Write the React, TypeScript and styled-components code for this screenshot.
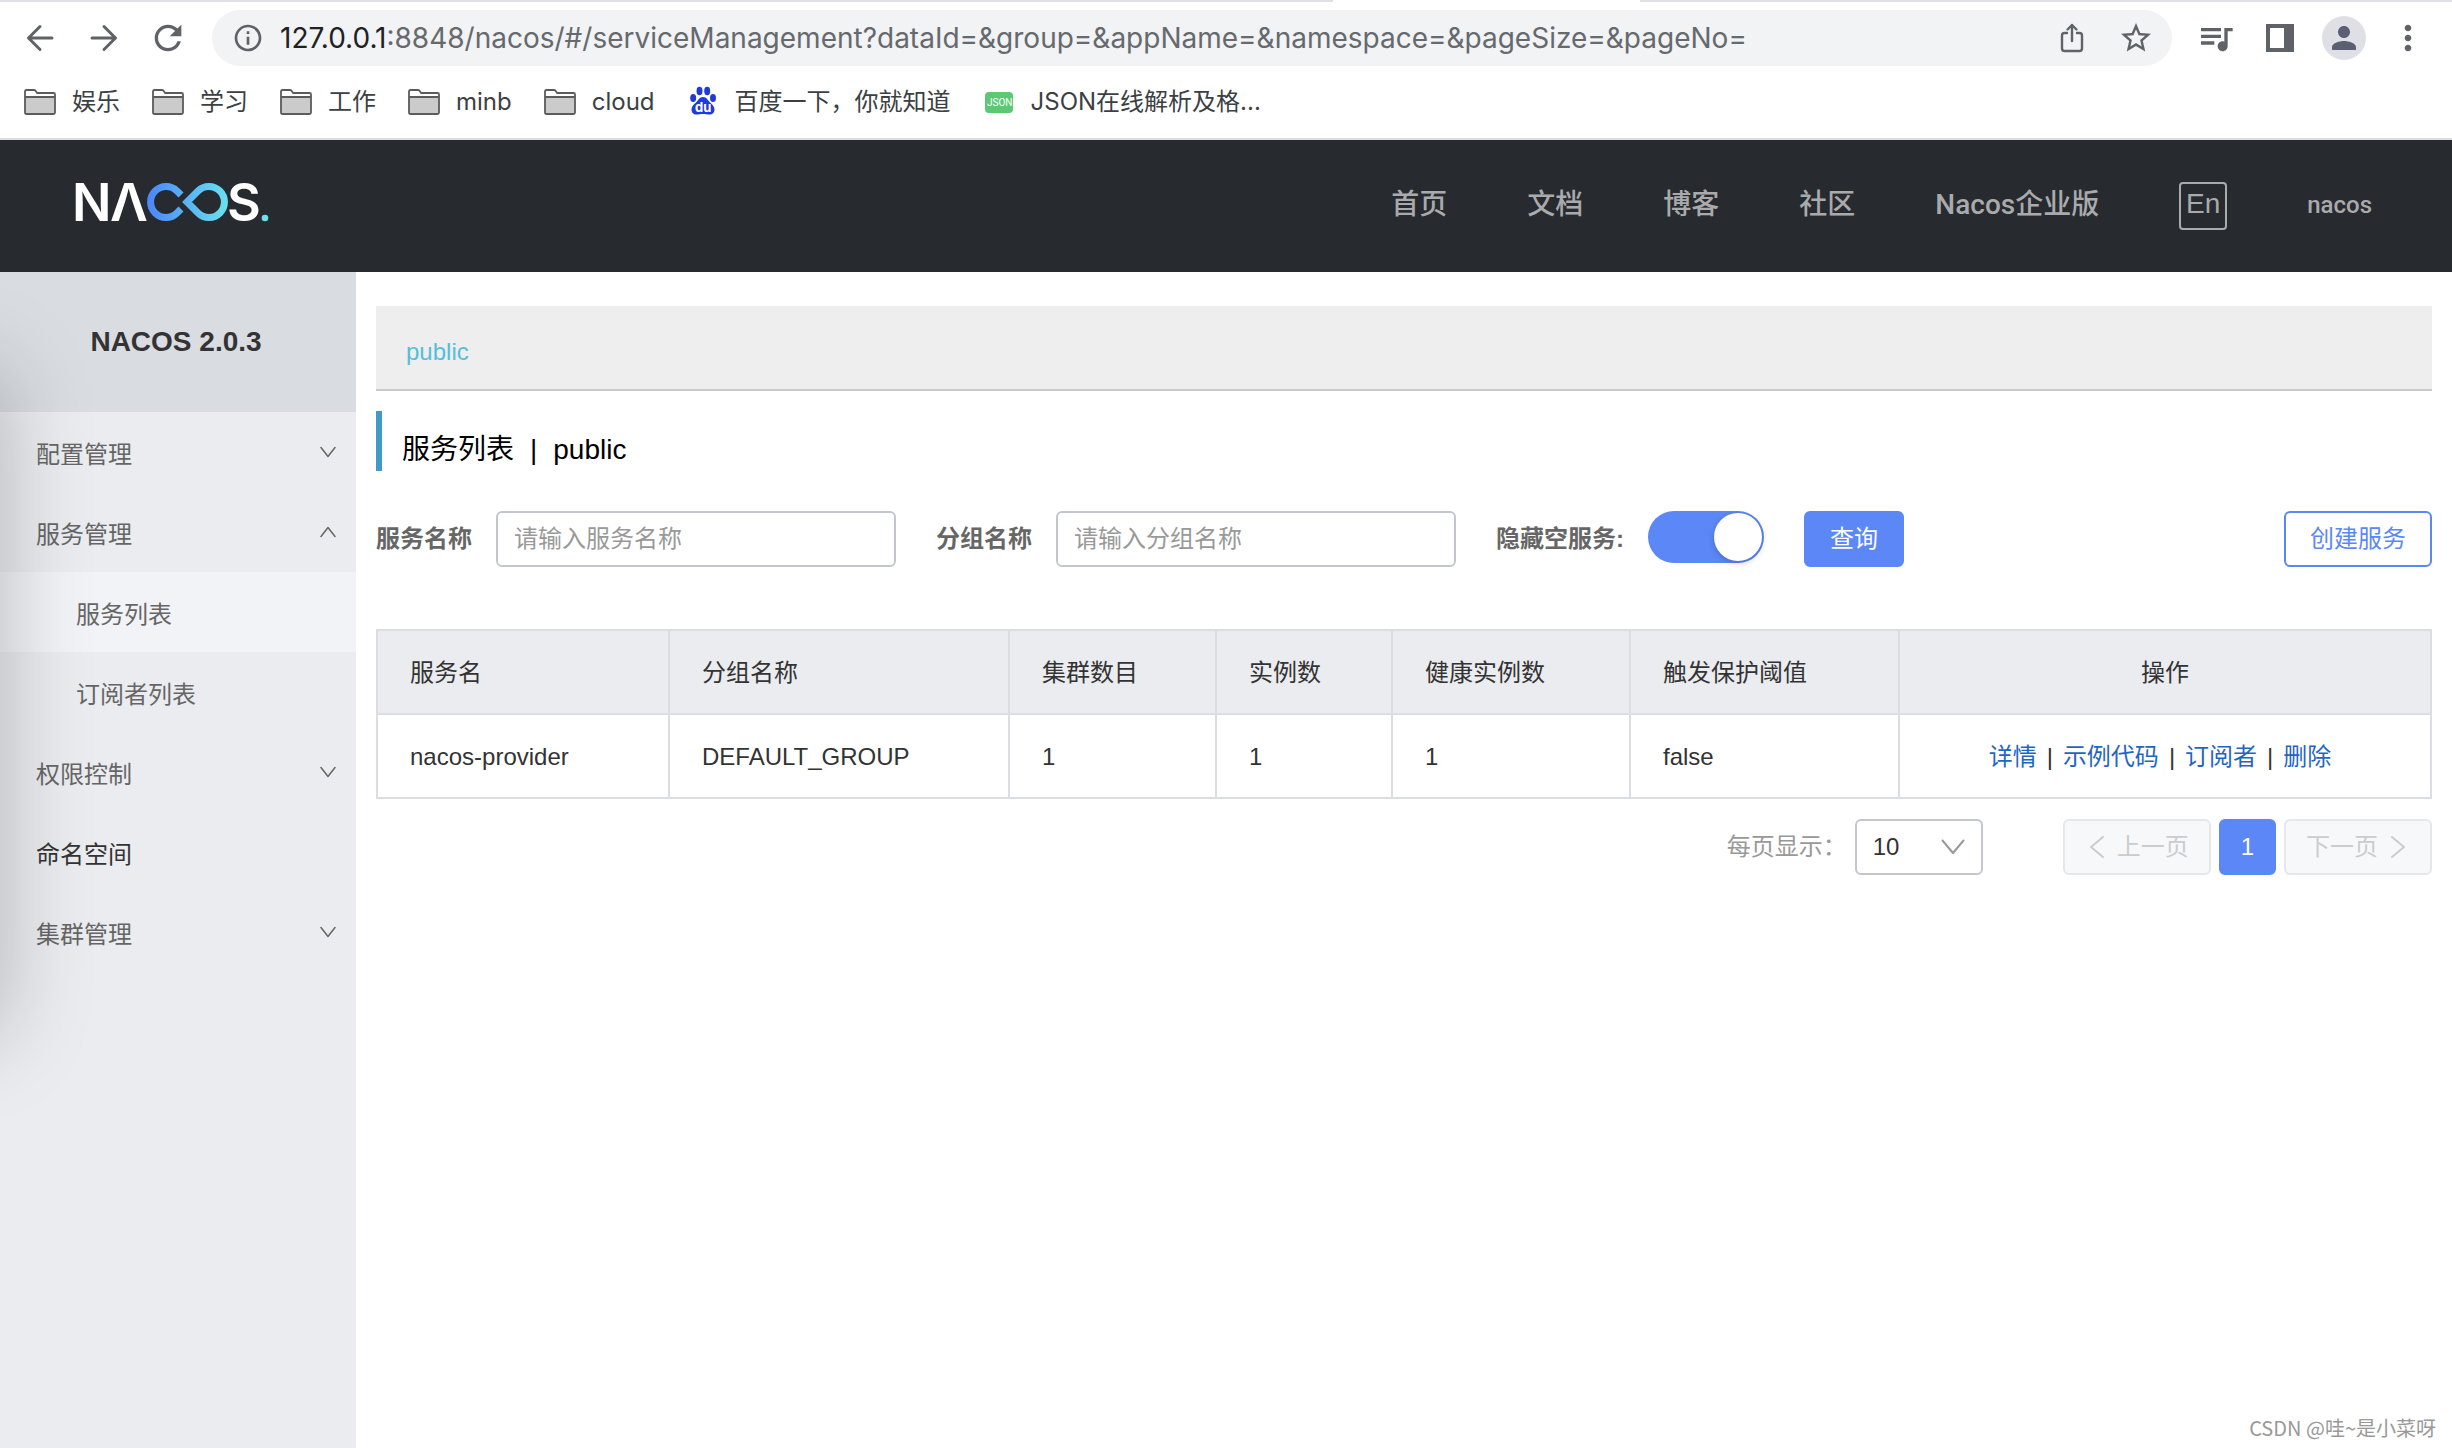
import React, { useState } from "react";
import styled, { createGlobalStyle, css } from "styled-components";
import {
  MdInfoOutline,
  MdMoreVert,
  MdPerson,
  MdQueueMusic,
  MdRefresh,
  MdStarBorder,
} from "react-icons/md";

const fonts = {
  page: '"Liberation Sans", "Noto Sans CJK SC", sans-serif',
  chrome: 'Inter, "Noto Sans CJK SC", sans-serif',
  nav: 'Roboto, "Noto Sans CJK SC", sans-serif',
};

const colors = {
  primary: "#5b87f7",
  border: "#c3c6cf",
  tableLine: "#dcdde2",
  side: "#ebecf0",
  icon: "#5f6368",
};

const GlobalStyle = createGlobalStyle`
  *, *::before, *::after { box-sizing: border-box; }
  body { margin: 0; background: #fff; font: 24px/36px ${fonts.page}; color: #333; }
  button, input, select { font: inherit; color: inherit; margin: 0; }
  button { cursor: pointer; }
  a { color: inherit; text-decoration: none; }
  svg { display: block; flex: none; }
`;

const Page = styled.div`
  position: relative;
  display: flex;
  flex-direction: column;
  min-height: 100vh;
`;

/* ---------- browser chrome ---------- */

const Chrome = styled.div`
  font-family: ${fonts.chrome};
  border-bottom: 2px solid #dadce0;
`;

const TabEdge = styled.div`
  display: flex;
  height: 2px;
  background: #fff;
`;

const TabEdgePart = styled.span<{ $grow: number; $shaded?: boolean }>`
  flex: ${(p) => p.$grow} 1 0;
  background: ${(p) => (p.$shaded ? "#e1e0e6" : "transparent")};
`;

const Toolbar = styled.div`
  display: flex;
  align-items: center;
  padding: 8px 12px 8px 8px;
`;

const ToolButton = styled.button`
  display: flex;
  align-items: center;
  justify-content: center;
  width: 64px;
  height: 56px;
  padding: 0;
  border: 0;
  background: none;
  color: ${colors.icon};
`;

const AddressBar = styled.div`
  flex: 1;
  display: flex;
  align-items: center;
  height: 56px;
  margin: 0 12px;
  padding: 0 4px 0 20px;
  border-radius: 28px;
  background: #f1f3f4;
  color: ${colors.icon};
`;

const Url = styled.span`
  flex: 1;
  margin-left: 16px;
  font-size: 28px;
  white-space: nowrap;
  color: #66696d;
`;

const Host = styled.span`
  color: #202124;
`;

const Avatar = styled.span`
  display: flex;
  align-items: center;
  justify-content: center;
  width: 44px;
  height: 44px;
  border-radius: 50%;
  background: #dfe0e5;
  color: #5a6072;
`;

const Bookmarks = styled.nav`
  display: flex;
  gap: 32px;
  padding: 10px 24px 18px;
  height: 64px;
`;

const Bookmark = styled.a`
  display: flex;
  align-items: center;
  gap: 16px;
  white-space: nowrap;
  color: #3c4043;
`;

const BaiduText = styled.text`
  font: bold 13px ${fonts.chrome};
  fill: #fff;
`;

const JsonText = styled.text`
  font: 10px Roboto, sans-serif;
  fill: #fff;
`;

/* ---------- console header ---------- */

const Header = styled.header`
  display: flex;
  align-items: center;
  justify-content: space-between;
  height: 132px;
  padding: 0 80px 0 76px;
  background: #272a2f;
`;

const LogoLink = styled.a`
  padding-bottom: 8px;
`;

const LogoText = styled.text`
  font: 600 52px Inter, sans-serif;
  fill: #fff;
`;

const TopNav = styled.nav`
  display: flex;
  align-items: center;
  gap: 80px;
  font: 500 28px/40px ${fonts.nav};
  color: #a9aaac;
  white-space: nowrap;

  a {
    padding-bottom: 2px;
  }
`;

const LanguageButton = styled.button`
  width: 48px;
  height: 48px;
  padding: 0 0 4px;
  border: 2px solid #a9aaac;
  border-radius: 4px;
  background: none;
  font-family: ${fonts.page};
`;

const UserLink = styled.a`
  font-size: 24px;
`;

/* ---------- sidebar ---------- */

const Body = styled.div`
  flex: 1;
  display: flex;
`;

const Sidebar = styled.aside`
  position: relative;
  overflow: hidden;
  flex: none;
  width: 356px;
  background: ${colors.side};

  &::after {
    content: "";
    position: absolute;
    top: 100px;
    left: -200px;
    width: 200px;
    height: 660px;
    box-shadow: 0 0 90px rgba(0, 0, 0, 0.25);
    pointer-events: none;
  }
`;

const Version = styled.h1`
  display: flex;
  align-items: center;
  justify-content: center;
  height: 140px;
  margin: 0;
  padding-right: 4px;
  background: #d9dce1;
  font-size: 28px;
  line-height: 40px;
`;

const menuRow = css`
  display: flex;
  align-items: center;
  justify-content: space-between;
  width: 100%;
  height: 80px;
  border: 0;
  text-align: left;

  svg {
    margin-bottom: 6px;
  }
`;

const MenuGroup = styled.button`
  ${menuRow}
  padding: 6px 20px 0 36px;
  background: none;
  color: #666;
`;

const MenuLink = styled.a<{ $nested?: boolean; $active?: boolean }>`
  ${menuRow}
  padding: 6px 20px 0 ${(p) => (p.$nested ? 76 : 36)}px;
  background: ${(p) => (p.$active ? "#f2f3f7" : "transparent")};
  color: ${(p) => (p.$nested ? "#666" : "#333")};
`;

/* ---------- content ---------- */

const Content = styled.main`
  flex: 1;
  min-width: 0;
  padding: 34px 20px;
`;

const NamespaceBar = styled.div`
  height: 85px;
  padding: 28px 30px 0;
  border-bottom: 2px solid #c9cacc;
  background: #eee;
  color: #56bedb;
`;

const Heading = styled.h2`
  height: 60px;
  margin: 20px 0 40px;
  padding: 19px 0 0 20px;
  border-left: 6px solid #4199c9;
  font-size: 28px;
  font-weight: 400;
  line-height: 40px;
  color: #000;
`;

const HeadingBar = styled.span`
  margin: 0 16px;
`;

const SearchForm = styled.form`
  display: flex;
  align-items: center;
  height: 56px;
  margin-bottom: 62px;
`;

const Field = styled.label`
  display: flex;
  align-items: center;
  gap: 24px;
  margin-right: 40px;
  font-weight: 700;
  color: #666;
  white-space: nowrap;
`;

const TextInput = styled.input`
  width: 400px;
  height: 56px;
  padding: 0 16px;
  border: 2px solid ${colors.border};
  border-radius: 6px;
  font-weight: 400;
  outline: none;

  &::placeholder {
    color: #999;
  }
`;

const Switch = styled.input`
  appearance: none;
  display: flex;
  width: 116px;
  height: 52px;
  margin-bottom: 4px;
  padding: 2px;
  border-radius: 26px;
  background: #c4c6cf;
  cursor: pointer;

  &::after {
    content: "";
    width: 48px;
    height: 48px;
    border-radius: 50%;
    background: #fff;
    box-shadow: 0 2px 6px rgba(0, 0, 0, 0.2);
  }

  &:checked {
    justify-content: flex-end;
    background: ${colors.primary};
  }
`;

const Button = styled.button<{ $kind: "primary" | "outline" | "plain" }>`
  display: flex;
  align-items: center;
  justify-content: center;
  gap: 12px;
  height: 56px;
  padding: 0 24px;
  border: 2px solid ${colors.primary};
  border-radius: 6px;
  background: ${(p) => (p.$kind === "primary" ? colors.primary : "#fff")};
  color: ${(p) => (p.$kind === "primary" ? "#fff" : colors.primary)};
  white-space: nowrap;

  &:disabled {
    border-color: #e6e7eb;
    background: #f7f8fa;
    color: #ccc;
    cursor: default;
  }
`;

const CreateButton = styled(Button)`
  margin-left: auto;
`;

const PageButton = styled(Button)`
  padding: 0 20px;
`;

const Table = styled.table`
  width: 100%;
  table-layout: fixed;
  border-collapse: separate;
  border-spacing: 0;
  border: solid ${colors.tableLine};
  border-width: 2px 0 0 2px;
`;

const cell = css<{ $center?: boolean }>`
  height: 84px;
  padding: 2px 32px 0;
  border: solid ${colors.tableLine};
  border-width: 0 2px 2px 0;
  font-weight: 400;
  text-align: ${(p) => (p.$center ? "center" : "left")};
`;

const HeadCell = styled.th<{ $center?: boolean }>`
  ${cell}
  background: ${colors.side};
`;

const Cell = styled.td<{ $center?: boolean }>`
  ${cell}
`;

const Actions = styled.div`
  display: flex;
  justify-content: center;
  gap: 10px;
  padding-right: 10px;
`;

const ActionLink = styled.a`
  color: #1f66c4;
`;

const Pager = styled.div`
  display: flex;
  align-items: center;
  justify-content: flex-end;
  gap: 8px;
  margin-top: 20px;
`;

const PageSize = styled.label`
  display: flex;
  align-items: center;
  gap: 8px;
  margin-right: 72px;
  color: #999;
`;

const SelectBox = styled.span`
  position: relative;
  display: block;

  svg {
    position: absolute;
    top: 20px;
    right: 18px;
    pointer-events: none;
  }
`;

const Select = styled.select`
  appearance: none;
  display: block;
  width: 128px;
  height: 56px;
  padding: 0 16px;
  border: 2px solid ${colors.border};
  border-radius: 6px;
  background: #fff;
  color: #333;
`;

const Watermark = styled.div`
  position: absolute;
  right: 16px;
  bottom: 4px;
  font: 20px/32px "Noto Sans CJK SC", sans-serif;
  color: #999;
`;

/* ---------- icons ---------- */

const Arrow = ({ forward }: { forward?: boolean }) => (
  <svg width="28" height="28" viewBox="0 0 28 28" fill="none" stroke="currentColor" strokeWidth="3" strokeLinecap="round" strokeLinejoin="round">
    {forward ? <path d="M2 14h23M14 2.5 25.5 14 14 25.5" /> : <path d="M26 14H3M14 2.5 2.5 14 14 25.5" />}
  </svg>
);

const ShareIcon = () => (
  <svg width="24" height="30" viewBox="0 0 24 30" fill="none" stroke="currentColor" strokeWidth="2.4" strokeLinecap="round" strokeLinejoin="round">
    <path d="M7 10H4.500a2.500 2.500 0 0 0-2.500 2.500v13a2.500 2.500 0 0 0 2.500 2.500h15a2.500 2.500 0 0 0 2.500-2.500v-13a2.500 2.500 0 0 0-2.500-2.500H17M12 18V2M7.500 6.500 12 2l4.500 4.500" />
  </svg>
);

const PanelIcon = () => (
  <svg width="28" height="28" viewBox="0 0 28 28" fill="currentColor">
    <path fillRule="evenodd" d="M0 0h28v28H0zM4 4v20h14V4z" />
  </svg>
);

const FolderIcon = () => (
  <svg width="32" height="28" viewBox="0 0 32 28">
    <path d="M1 8V3.500Q1 2 2.500 2H10q1 0 1.500.8L13.200 5H29.500Q31 5 31 6.500V8" fill="#fff" stroke="#5b5b5b" strokeWidth="1.800" />
    <path d="M1 9h30v15.500q0 1.500-1.500 1.500h-27Q1 26 1 24.500z" fill="#cbcbcb" stroke="#5b5b5b" strokeWidth="1.800" />
  </svg>
);

const BaiduIcon = () => (
  <svg width="32" height="32" viewBox="0 0 32 32" fill="#2039dd">
    <ellipse cx="12.500" cy="5" rx="3" ry="4.200" />
    <ellipse cx="20.200" cy="5" rx="3" ry="4.200" />
    <ellipse cx="6.200" cy="12" rx="3" ry="4" />
    <ellipse cx="26" cy="12" rx="3" ry="4" />
    <path d="M16 11c3.500 0 4.500 3 7 5.500 3 2.500 4.500 4.500 4.500 7 0 3-2 5-5 5-2.500 0-4-.6-6.500-.6s-4 .6-6.500.6c-3 0-5-2-5-5 0-2.500 1.500-4.500 4.500-7 2.500-2.500 3.500-5.500 7-5.500z" />
    <BaiduText x="8" y="26">du</BaiduText>
  </svg>
);

const JsonIcon = () => (
  <svg width="32" height="32" viewBox="0 0 32 32">
    <rect x="2" y="6" width="28" height="21" rx="4" fill="#5bc973" />
    <JsonText x="4" y="20">JSON</JsonText>
  </svg>
);

const Chevron = ({ up }: { up?: boolean }) => (
  <svg width="16" height="12" viewBox="0 0 16 12" fill="none" stroke="currentColor" strokeWidth="1.500" strokeLinecap="round" strokeLinejoin="round">
    <path d={up ? "M1 10.500 8 1.500l7 9" : "M1 1.500l7 9 7-9"} />
  </svg>
);

const SelectArrow = () => (
  <svg width="24" height="16" viewBox="0 0 24 16" fill="none" stroke="#999" strokeWidth="2" strokeLinecap="round" strokeLinejoin="round">
    <path d="M1.500 1.500 12 14 22.500 1.500" />
  </svg>
);

const PageArrow = ({ next }: { next?: boolean }) => (
  <svg width="20" height="24" viewBox="0 0 20 24" fill="none" stroke="currentColor" strokeWidth="2" strokeLinecap="round" strokeLinejoin="round">
    <path d={next ? "M2 2l12 10L2 22" : "M18 2 6 12l12 10"} />
  </svg>
);

const Logo = () => (
  <svg width="192" height="38" viewBox="0 0 192 38" overflow="visible" role="img" aria-label="NACOS">
    <defs>
      <linearGradient id="loop" gradientUnits="userSpaceOnUse" x1="71" y1="0" x2="152" y2="0">
        <stop offset="0" stopColor="#4b86f9" />
        <stop offset="1" stopColor="#68e2ef" />
      </linearGradient>
    </defs>
    <LogoText x="-4" y="38">N</LogoText>
    <LogoText x="34" y="38">Λ</LogoText>
    <g fill="none" stroke="url(#loop)" strokeWidth="7">
      <path d="M105 12 101 8A15.500 15.500 0 1 0 101 30L105 26" />
      <path d="M111 19 122 8A15.500 15.500 0 1 1 122 30Z" />
    </g>
    <LogoText x="151" y="38">S</LogoText>
    <circle cx="189" cy="35" r="3.300" fill="#68e2ef" />
  </svg>
);

/* ---------- data ---------- */

const bookmarks = [
  { label: "娱乐", icon: <FolderIcon /> },
  { label: "学习", icon: <FolderIcon /> },
  { label: "工作", icon: <FolderIcon /> },
  { label: "minb", icon: <FolderIcon /> },
  { label: "cloud", icon: <FolderIcon /> },
  { label: "百度一下，你就知道", icon: <BaiduIcon /> },
  { label: "JSON在线解析及格...", icon: <JsonIcon /> },
];

const navLinks = ["首页", "文档", "博客", "社区", "Nacos企业版"];

const columns = [
  { title: "服务名", width: 292 },
  { title: "分组名称", width: 340 },
  { title: "集群数目", width: 207 },
  { title: "实例数", width: 176 },
  { title: "健康实例数", width: 238 },
  { title: "触发保护阈值", width: 269 },
  { title: "操作", width: 532, center: true },
];

const services = [["nacos-provider", "DEFAULT_GROUP", "1", "1", "1", "false"]];

const actions = ["详情", "示例代码", "订阅者", "删除"];

export default function App() {
  const [hideEmpty, setHideEmpty] = useState(true);

  return (
    <Page>
      <GlobalStyle />
      <Chrome>
        <TabEdge>
          <TabEdgePart $grow={1333} $shaded />
          <TabEdgePart $grow={307} />
          <TabEdgePart $grow={812} $shaded />
        </TabEdge>
        <Toolbar>
          <ToolButton aria-label="后退"><Arrow /></ToolButton>
          <ToolButton aria-label="前进"><Arrow forward /></ToolButton>
          <ToolButton aria-label="刷新"><MdRefresh size={40} /></ToolButton>
          <AddressBar>
            <MdInfoOutline size={32} />
            <Url>
              <Host>127.0.0.1</Host>
              :8848/nacos/#/serviceManagement?dataId=&amp;group=&amp;appName=&amp;namespace=&amp;pageSize=&amp;pageNo=
            </Url>
            <ToolButton aria-label="分享"><ShareIcon /></ToolButton>
            <ToolButton aria-label="收藏"><MdStarBorder size={36} /></ToolButton>
          </AddressBar>
          <ToolButton aria-label="媒体"><MdQueueMusic size={40} /></ToolButton>
          <ToolButton aria-label="侧边栏"><PanelIcon /></ToolButton>
          <ToolButton aria-label="用户"><Avatar><MdPerson size={36} /></Avatar></ToolButton>
          <ToolButton aria-label="更多"><MdMoreVert size={40} /></ToolButton>
        </Toolbar>
        <Bookmarks>
          {bookmarks.map((b) => (
            <Bookmark key={b.label} href="#">
              {b.icon}
              {b.label}
            </Bookmark>
          ))}
        </Bookmarks>
      </Chrome>

      <Header>
        <LogoLink href="#"><Logo /></LogoLink>
        <TopNav>
          {navLinks.map((label) => (
            <a key={label} href="#">{label}</a>
          ))}
          <LanguageButton>En</LanguageButton>
          <UserLink href="#">nacos</UserLink>
        </TopNav>
      </Header>

      <Body>
        <Sidebar>
          <Version>NACOS 2.0.3</Version>
          <nav>
            <MenuGroup>配置管理<Chevron /></MenuGroup>
            <MenuGroup>服务管理<Chevron up /></MenuGroup>
            <MenuLink href="#" $nested $active>服务列表</MenuLink>
            <MenuLink href="#" $nested>订阅者列表</MenuLink>
            <MenuGroup>权限控制<Chevron /></MenuGroup>
            <MenuLink href="#">命名空间</MenuLink>
            <MenuGroup>集群管理<Chevron /></MenuGroup>
          </nav>
        </Sidebar>

        <Content>
          <NamespaceBar><a href="#">public</a></NamespaceBar>
          <Heading>服务列表<HeadingBar>|</HeadingBar>public</Heading>

          <SearchForm onSubmit={(e) => e.preventDefault()}>
            <Field>服务名称<TextInput placeholder="请输入服务名称" /></Field>
            <Field>分组名称<TextInput placeholder="请输入分组名称" /></Field>
            <Field>
              隐藏空服务:
              <Switch type="checkbox" checked={hideEmpty} onChange={(e) => setHideEmpty(e.target.checked)} />
            </Field>
            <Button $kind="primary" type="submit">查询</Button>
            <CreateButton $kind="outline" type="button">创建服务</CreateButton>
          </SearchForm>

          <Table>
            <colgroup>
              {columns.map((c) => (
                <col key={c.title} width={c.width} />
              ))}
            </colgroup>
            <thead>
              <tr>
                {columns.map((c) => (
                  <HeadCell key={c.title} $center={c.center}>{c.title}</HeadCell>
                ))}
              </tr>
            </thead>
            <tbody>
              {services.map((row) => (
                <tr key={row[0]}>
                  {row.map((value, i) => (
                    <Cell key={i}>{value}</Cell>
                  ))}
                  <Cell $center>
                    <Actions>
                      {actions.map((label, i) => (
                        <React.Fragment key={label}>
                          {i > 0 && <span>|</span>}
                          <ActionLink href="#">{label}</ActionLink>
                        </React.Fragment>
                      ))}
                    </Actions>
                  </Cell>
                </tr>
              ))}
            </tbody>
          </Table>

          <Pager>
            <PageSize>
              每页显示：
              <SelectBox>
                <Select defaultValue="10">
                  <option>10</option>
                </Select>
                <SelectArrow />
              </SelectBox>
            </PageSize>
            <PageButton $kind="plain" disabled><PageArrow />上一页</PageButton>
            <PageButton $kind="primary">1</PageButton>
            <PageButton $kind="plain" disabled>下一页<PageArrow next /></PageButton>
          </Pager>
        </Content>
      </Body>

      <Watermark>CSDN @哇~是小菜呀</Watermark>
    </Page>
  );
}
